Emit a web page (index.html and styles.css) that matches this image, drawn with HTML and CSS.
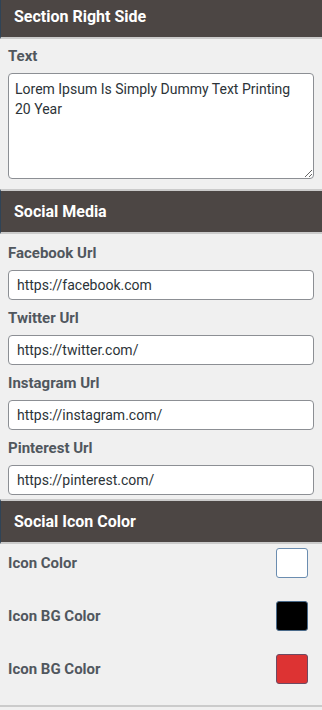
FILE: index.html
```html
<!DOCTYPE html>
<html lang="en">
<head>
<meta charset="utf-8">
<title>Settings</title>
<link rel="stylesheet" href="styles.css">
</head>
<body>
<div class="panel">
  <div class="panel-head">Section Right Side</div>
  <div class="panel-body body-text">
    <div class="field">
      <label class="label">Text</label>
      <textarea class="textarea">Lorem Ipsum Is Simply Dummy Text Printing 20 Year</textarea>
    </div>
  </div>

  <div class="panel-head">Social Media</div>
  <div class="panel-body body-social">
    <div class="field">
      <label class="label">Facebook Url</label>
      <input class="input" type="text" value="https://facebook.com">
    </div>
    <div class="field">
      <label class="label">Twitter Url</label>
      <input class="input" type="text" value="https://twitter.com/">
    </div>
    <div class="field">
      <label class="label">Instagram Url</label>
      <input class="input" type="text" value="https://instagram.com/">
    </div>
    <div class="field">
      <label class="label">Pinterest Url</label>
      <input class="input" type="text" value="https://pinterest.com/">
    </div>
  </div>

  <div class="panel-head">Social Icon Color</div>
  <div class="panel-body body-colors">
    <div class="color-row">
      <span class="label">Icon Color</span>
      <span class="swatch swatch-white"></span>
    </div>
    <div class="color-row">
      <span class="label">Icon BG Color</span>
      <span class="swatch swatch-black"></span>
    </div>
    <div class="color-row">
      <span class="label">Icon BG Color</span>
      <span class="swatch swatch-red"></span>
    </div>
  </div>
</div>
</body>
</html>
```

FILE: styles.css
```css
* { box-sizing: border-box; }
html, body {
  margin: 0;
  padding: 0;
  background: #f0f0f0;
}
body {
  font-family: Roboto, "Liberation Sans", Arial, sans-serif;
  overflow: hidden;
}
.panel {
  margin-top: -6px;
  display: flex;
  flex-direction: column;
}
.panel-head {
  height: 45px;
  border-top: 2px solid #cbcbcb;
  border-bottom: 2px solid #cbcbcb;
  border-left: 1px solid #2f4356;
  background: #4c4644;
  color: #ffffff;
  font-size: 16px;
  font-weight: 700;
  padding-left: 13px;
  display: flex;
  align-items: center;
}
.panel-body {
  padding: 0 8px;
  display: flex;
  flex-direction: column;
}
.body-text { padding-top: 7px; padding-bottom: 10px; }
.body-social { padding-top: 9px; padding-bottom: 4px; gap: 8px; }
.body-colors {
  padding-top: 4px;
  padding-bottom: 21px;
  gap: 23px;
  border-bottom: 2px solid #cbcbcb;
}
.field {
  display: flex;
  flex-direction: column;
  gap: 7px;
}
.label {
  font-size: 15px;
  line-height: 20px;
  font-weight: 700;
  color: #50575e;
}
.textarea, .input {
  width: 100%;
  border: 1px solid #8c8f94;
  border-radius: 4px;
  background: #ffffff;
  color: #2c3338;
  font-family: Roboto, "Liberation Sans", Arial, sans-serif;
  font-size: 14px;
  margin: 0;
}
.textarea {
  height: 106px;
  padding: 5px 6px;
  line-height: 20px;
  resize: vertical;
  display: block;
}
.input {
  height: 30px;
  padding: 0 8px;
  line-height: 28px;
}
.color-row {
  height: 30px;
  display: flex;
  align-items: center;
  justify-content: space-between;
}
.swatch {
  width: 32px;
  height: 30px;
  margin-right: 6px;
  border-radius: 3px;
  border: 1px solid #6b8db0;
}
.swatch-white { background: #ffffff; }
.swatch-black { background: #000000; border-color: #4a6a8a; }
.swatch-red { background: #dd3333; border-color: #6e4a62; }
```
